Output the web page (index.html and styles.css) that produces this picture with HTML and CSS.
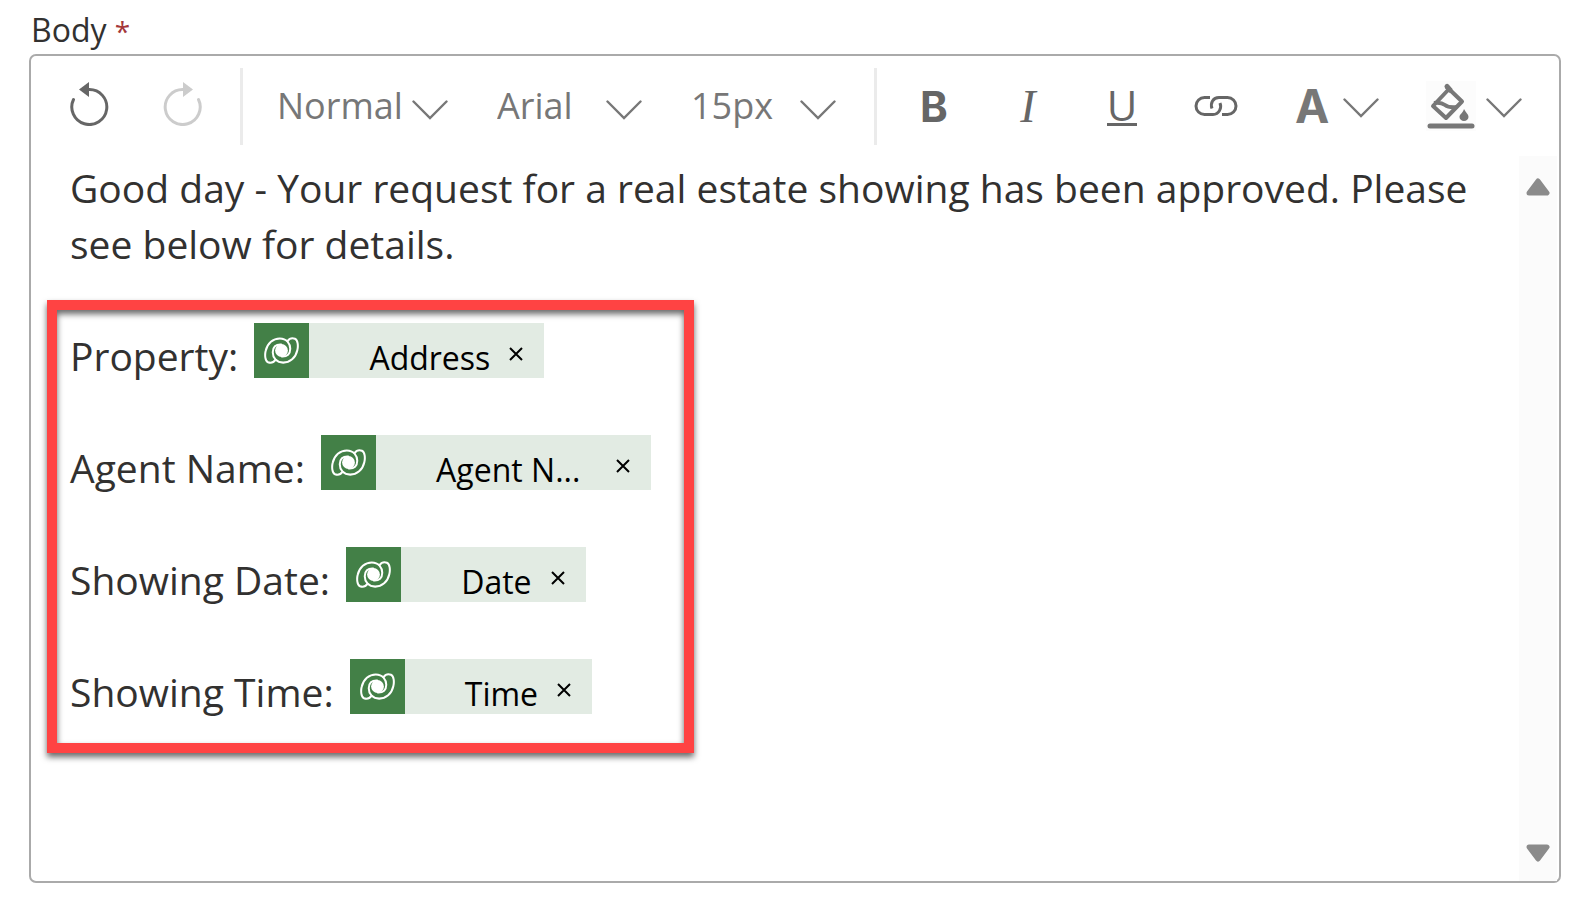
FILE: index.html
```html
<!DOCTYPE html>
<html lang="en">
<head>
<meta charset="utf-8">
<title>Body</title>
<meta name="viewport" content="width=device-width, initial-scale=1">
<link rel="stylesheet" href="styles.css">
</head>
<body>
<svg class="defs" aria-hidden="true">
  <symbol id="chevron" viewBox="0 0 36 20"><path d="M1.500 1.500 18 18 34.500 1.500" fill="none" stroke="currentColor" stroke-width="2.400" stroke-linecap="round"/></symbol>
  <symbol id="dataverse" viewBox="-1 -1 104 80">
    <g fill="none" stroke="#fff" stroke-width="6" stroke-linecap="round">
      <path d="M33 67C28 74 19 77 11 74C2 70 1 52 4 40C9 17 26 3 46 3C66 3 77 18 77 34C77 49 68 58 52 57"/>
      <path d="M33 67C28 74 19 77 11 74C2 70 1 52 4 40C9 17 26 3 46 3C66 3 77 18 77 34C77 49 68 58 52 57" transform="rotate(180 51 39)"/>
    </g>
    <circle cx="51" cy="39" r="19" fill="#fff"/>
  </symbol>
  <symbol id="close" viewBox="0 0 16 16"><path d="M2 2 14 14M14 2 2 14" fill="none" stroke="currentColor" stroke-width="2"/></symbol>
</svg>
<main class="field">
  <label class="field-label" id="body-label">Body <span class="required">*</span></label>
  <div class="editor">
    <div class="toolbar" role="toolbar" aria-label="Formatting">
      <button class="tool history" type="button" aria-label="Undo">
        <svg width="40" height="44" viewBox="0 0 40 44"><path d="M4.500 17.500A17.500 17.500 0 1 0 20 7.500" fill="none" stroke="currentColor" stroke-width="3" stroke-linecap="round"/><path d="M10 7.500 20 0V15Z" fill="currentColor"/></svg>
      </button>
      <button class="tool history" type="button" aria-label="Redo" disabled>
        <svg width="40" height="44" viewBox="0 0 40 44"><path d="M35.500 17.500A17.500 17.500 0 1 1 20 7.500" fill="none" stroke="currentColor" stroke-width="3" stroke-linecap="round"/><path d="M30 7.500 20 0V15Z" fill="currentColor"/></svg>
      </button>
      <span class="divider"></span>
      <div class="selects">
        <span class="picker picker-wide"><select aria-label="Block style"><option>Normal</option></select><svg class="chevron"><use href="#chevron"/></svg></span>
        <span class="picker"><select aria-label="Font"><option>Arial</option></select><svg class="chevron"><use href="#chevron"/></svg></span>
        <span class="picker"><select aria-label="Font size"><option>15px</option></select><svg class="chevron"><use href="#chevron"/></svg></span>
      </div>
      <span class="divider"></span>
      <button class="tool bold" type="button" aria-label="Bold">B</button>
      <button class="tool italic" type="button" aria-label="Italic">I</button>
      <button class="tool underline" type="button" aria-label="Underline"><span>U</span></button>
      <button class="tool" type="button" aria-label="Link">
        <svg width="44" height="22" viewBox="0 0 44 22"><path d="M16 2.500H10.500A8.500 8.500 0 0 0 10.500 19.500H19C25 19.500 28 13 26 8M28 19.500H33.500A8.500 8.500 0 0 0 33.500 2.500H25C19 2.500 16 8 18 13.500" fill="none" stroke="currentColor" stroke-width="3"/></svg>
      </button>
      <div class="colors">
        <button class="color" type="button" aria-label="Text color"><span class="letter">A</span><svg class="chevron"><use href="#chevron"/></svg></button>
        <button class="color" type="button" aria-label="Highlight color">
          <svg class="bucket" viewBox="0 0 50 50"><g fill="none" stroke="currentColor" stroke-width="4"><path d="M23 8 36 20.500 20 37 7 25Z" stroke-linejoin="round"/><path d="M21 5.500 24 9" stroke-width="5" stroke-linecap="round"/><path d="M8 22Q15 21 19 24T31 26"/><path d="M4 45H46" stroke-width="5" stroke-linecap="round"/></g><path d="M38 28C40 32 42.500 33 42.500 36A4.500 4 0 0 1 33.500 36C33.500 33 37 32 38 28Z" fill="currentColor"/></svg>
          <svg class="chevron"><use href="#chevron"/></svg>
        </button>
      </div>
    </div>
    <div class="content">
      <div class="text" role="textbox" aria-multiline="true" aria-labelledby="body-label">
        <p>Good day - Your request for a real estate showing has been approved. Please see below for details.</p>
        <div class="details">
          <p>Property: <span class="token"><svg class="token-icon"><use href="#dataverse"/></svg><span class="token-name">Address</span><button type="button" aria-label="Remove Address"><svg><use href="#close"/></svg></button></span></p>
          <p>Agent Name: <span class="token"><svg class="token-icon"><use href="#dataverse"/></svg><span class="token-name long">Agent N...</span><button type="button" aria-label="Remove Agent Name"><svg><use href="#close"/></svg></button></span></p>
          <p>Showing Date: <span class="token"><svg class="token-icon"><use href="#dataverse"/></svg><span class="token-name">Date</span><button type="button" aria-label="Remove Date"><svg><use href="#close"/></svg></button></span></p>
          <p>Showing Time: <span class="token"><svg class="token-icon"><use href="#dataverse"/></svg><span class="token-name">Time</span><button type="button" aria-label="Remove Time"><svg><use href="#close"/></svg></button></span></p>
          <div class="highlight"></div>
        </div>
      </div>
      <div class="scrollbar" aria-hidden="true">
        <svg viewBox="0 0 24 18"><path d="M12 3 21 15H3Z"/></svg>
        <svg viewBox="0 0 24 18"><path d="M12 15 21 3H3Z"/></svg>
      </div>
    </div>
  </div>
</main>
</body>
</html>
```
FILE: styles.css
```css
* { box-sizing: border-box; }
body {
  margin: 0;
  background: #fff;
  color: #323130;
  font-family: "Segoe UI", "Open Sans", "Noto Sans", sans-serif;
}
.defs { position: absolute; width: 0; height: 0; }
button, select {
  margin: 0;
  padding: 0;
  border: 0;
  background: none;
  color: inherit;
  font: inherit;
}
.field {
  display: flex;
  flex-direction: column;
  min-height: 100vh;
  padding: 7px 29px 23px;
}
.field-label {
  padding-left: 2px;
  font-size: 32px;
  line-height: 46px;
}
.required { color: #a4373a; font-size: 28px; }
.editor {
  flex: 1;
  display: flex;
  flex-direction: column;
  border: 2px solid #aaa;
  border-radius: 7px;
}
.toolbar {
  display: flex;
  align-items: center;
  height: 100px;
  padding: 0 37px 0 11px;
  color: #666;
}
.tool {
  display: flex;
  align-items: center;
  justify-content: center;
  width: 94px;
  height: 76px;
}
.tool svg { display: block; }
.history { padding-bottom: 4px; }
.tool:disabled { color: #ccc; }
.divider {
  width: 3px;
  height: 77px;
  margin: 0 10px;
  background: #ebebeb;
}
.selects {
  display: flex;
  gap: 49px;
  padding: 0 28px 0 24px;
  color: #777;
  font-size: 36px;
  line-height: 56px;
}
.picker { position: relative; width: 145px; }
.picker-wide { width: 171px; }
.picker select { width: 100%; appearance: none; }
.picker .chevron {
  position: absolute;
  right: 0;
  top: 22px;
  pointer-events: none;
}
.chevron { width: 36px; height: 20px; }
.bold { font-family: Inter, sans-serif; font-size: 42px; font-weight: 700; }
.italic { font-family: "Liberation Serif", serif; font-size: 46px; font-style: italic; }
.underline { font-family: "Open Sans", sans-serif; font-size: 42px; line-height: 36px; }
.underline span { border-bottom: 3px solid; }
.colors {
  flex: 1;
  display: flex;
  justify-content: space-between;
  padding-left: 32px;
  color: #777;
}
.color { display: flex; align-items: center; }
.color .chevron { margin: 4px 0 0 10px; }
.color .letter { margin-right: 4px; }
.letter { font-family: Inter, sans-serif; font-size: 46px; font-weight: 700; line-height: 50px; }
.bucket { width: 50px; height: 50px; background: #fcfcfc; }
.content { flex: 1; display: flex; }
.text {
  flex: 1;
  padding: 4px 40px 0 39px;
  font-size: 39px;
  line-height: 56px;
}
.text p { margin: 0; }
.details {
  position: relative;
  display: grid;
  gap: 56px;
  margin-top: 56px;
}
.highlight {
  position: absolute;
  left: -23px;
  top: -28px;
  width: 647px;
  height: 453px;
  border: 10px solid #ff4343;
  filter: drop-shadow(0 4px 3px rgba(0, 0, 0, 0.6));
  pointer-events: none;
}
.token {
  display: inline-flex;
  align-items: center;
  height: 55px;
  margin: -5px 0 0 6px;
  background: #e2ebe3;
  color: #000;
  vertical-align: top;
  font-size: 32px;
}
.token-icon {
  width: 55px;
  height: 55px;
  padding: 14px 10px;
  background: #438047;
}
.token-name { padding: 14px 18px 0 60px; }
.token-name.long { padding-right: 35px; }
.token button { width: 36px; height: 24px; padding: 6px 20px 0 0; }
.token button svg { display: block; width: 16px; height: 16px; }
.scrollbar {
  display: flex;
  flex-direction: column;
  justify-content: space-between;
  width: 38px;
  margin-right: 2px;
  padding: 22px 7px 19px;
  background: #fbfbfb;
}
.scrollbar svg {
  width: 24px;
  height: 18px;
  fill: #8b8b8b;
  stroke: #8b8b8b;
  stroke-width: 5px;
  stroke-linejoin: round;
}
```
